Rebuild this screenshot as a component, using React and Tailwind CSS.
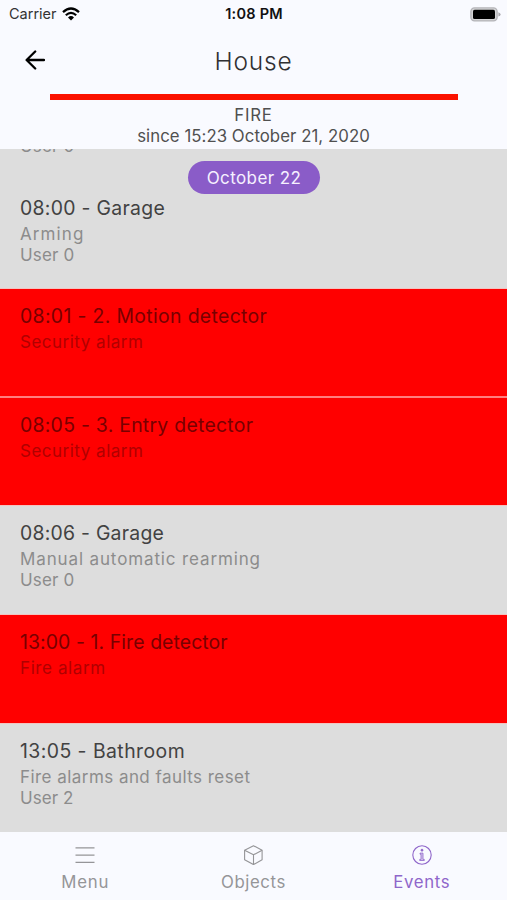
import { useState } from 'react';

const events = [
  {
    id: 2,
    title: '08:00 - Garage',
    lines: ['Arming', 'User 0'],
    alarm: false,
    frame: 'h-[108px] border-t border-transparent',
    titleSpacing: 'tracking-[0.3px]',
    lineSpacing: ['tracking-[1.1px]', 'tracking-[0.15px]'],
  },
  {
    id: 3,
    title: '08:01 - 2. Motion detector',
    lines: ['Security alarm'],
    alarm: true,
    frame: 'h-[108px] border-t border-[#f2c4c1]',
    titleSpacing: 'tracking-[0.35px]',
    lineSpacing: ['tracking-[0.5px]'],
  },
  {
    id: 4,
    title: '08:05 - 3. Entry detector',
    lines: ['Security alarm'],
    alarm: true,
    frame: 'h-[109px] border-t-2 border-[#ff7f7f]',
    titleSpacing: 'tracking-[0.27px]',
    lineSpacing: ['tracking-[0.5px]'],
  },
  {
    id: 5,
    title: '08:06 - Garage',
    lines: ['Manual automatic rearming', 'User 0'],
    alarm: false,
    frame: 'h-[109px] border-t border-[#f2c4c1]',
    titleSpacing: 'tracking-[0.25px]',
    lineSpacing: ['tracking-[0.87px]', 'tracking-[0.15px]'],
  },
  {
    id: 6,
    title: '13:00 - 1. Fire detector',
    lines: ['Fire alarm'],
    alarm: true,
    frame: 'h-[109px] border-t border-[#f2c4c1]',
    titleSpacing: 'tracking-[0.1px]',
    lineSpacing: ['tracking-[0.6px]'],
  },
  {
    id: 7,
    title: '13:05 - Bathroom',
    lines: ['Fire alarms and faults reset', 'User 2'],
    alarm: false,
    frame: 'h-[109px] border-t border-[#f2c4c1]',
    titleSpacing: 'tracking-[0.45px]',
    lineSpacing: ['tracking-[0.45px]', 'tracking-[0.05px]'],
  },
];

function WifiIcon() {
  return (
    <svg className="w-[18px] h-[14px]" viewBox="0 0 18 14">
      <path d="M1 5.1Q9-2 17 5.1" fill="none" stroke="#000" strokeWidth="2.3" />
      <path d="M3.8 8.2Q9 3.6 14.2 8.2" fill="none" stroke="#000" strokeWidth="2.2" />
      <path d="M6 10.4Q9 7.8 12 10.4L9 13.6Z" fill="#000" />
    </svg>
  );
}

function BatteryIcon() {
  return (
    <svg className="w-[31px] h-[15px]" viewBox="0 0 31 15">
      <rect x="0.9" y="0.9" width="26.2" height="13" rx="3.6" fill="#d4d4d6" stroke="#b4b4b8" strokeWidth="1.4" />
      <rect x="3" y="2.8" width="22" height="9.2" rx="1.6" fill="#000" />
      <path d="M28.4 5.2Q30.6 6 30.6 7.4T28.4 9.6Z" fill="#a9a9ad" />
    </svg>
  );
}

function MenuIcon() {
  return (
    <svg className="w-5 h-5" viewBox="0 0 20 20" fill="none" stroke="currentColor" strokeWidth="1.2">
      <path d="M0.5 2.9H19.5M0.5 10.1H19.5M0.5 17.4H19.5" />
    </svg>
  );
}

function CubeIcon() {
  return (
    <svg className="w-5 h-5" viewBox="0 0 20 20" fill="none" stroke="currentColor" strokeWidth="1.1" strokeLinejoin="round">
      <path d="M10.5 0.7L19.1 5.2V14.7L10.5 19.6L1.6 14.7V5.2Z" />
      <path d="M1.6 5.2L10.5 9.8L19.1 5.2M10.5 9.8V19.6" />
    </svg>
  );
}

function InfoIcon() {
  return (
    <svg className="w-5 h-5" viewBox="0 0 20 20" fill="none" stroke="currentColor">
      <circle cx="10" cy="10" r="9.2" strokeWidth="1.1" />
      <circle cx="10" cy="5.2" r="1.1" fill="currentColor" strokeWidth="0.6" />
      <path d="M8 8.1H11V14.4H12.3V15.5H7.7V14.4H9V9.2H8Z" fill="currentColor" fillOpacity="0.35" strokeWidth="0.8" />
    </svg>
  );
}

const tabs = [
  { name: 'Menu', icon: MenuIcon, spacing: 'tracking-[0.8px]' },
  { name: 'Objects', icon: CubeIcon, spacing: 'tracking-[0.6px]' },
  { name: 'Events', icon: InfoIcon, spacing: 'tracking-[0.65px]' },
];

function EventRow({ event }) {
  return (
    <li
      className={`shrink-0 pl-[20px] pt-[14px] whitespace-nowrap ${event.frame} ${
        event.alarm ? 'bg-[#ff0000]' : 'bg-[#dddddd]'
      }`}
    >
      <h2 className={`text-[19.4px] leading-[26px] ${event.titleSpacing} ${event.alarm ? 'text-[#780000]' : 'text-[#424242]'}`}>
        {event.title}
      </h2>
      {event.lines.map((line, index) => (
        <p
          key={line}
          className={`text-[17px] leading-[21px] first-of-type:mt-[3px] ${event.lineSpacing[index]} ${
            event.alarm ? 'text-[#b00000]' : 'text-[#8c8c8c]'
          }`}
        >
          {line}
        </p>
      ))}
    </li>
  );
}

function App() {
  const [activeTab, setActiveTab] = useState('Events');

  return (
    <div className="flex h-[900px] w-[507px] flex-col overflow-hidden bg-[#f9faff] font-['Inter',sans-serif]">
      {/* status bar */}
      <div className="grid h-7 shrink-0 grid-cols-3 items-center pl-[7px] pr-[6px] text-[14.5px]">
        <div className="flex items-center gap-[5px] pl-[2px] text-[#333]">
          Carrier <WifiIcon />
        </div>
        <div className="text-center font-semibold tracking-[0.25px] text-[#111]">1:08 PM</div>
        <div className="flex justify-end">
          <BatteryIcon />
        </div>
      </div>

      {/* header */}
      <header className="grid h-[66px] shrink-0 grid-cols-[70px_1fr_70px] items-center">
        <button className="pb-[3px] pl-[25px]">
          <svg className="h-5 w-5" viewBox="0 0 20 20" fill="none" stroke="#000" strokeWidth="2.3" strokeLinecap="round" strokeLinejoin="round">
            <path d="M19 10H1.8M10.2 1.5L1.6 10L10.2 18.5" />
          </svg>
        </button>
        <h1 className="text-center text-[24.5px] font-light tracking-[0.8px] text-[#303032]">House</h1>
      </header>

      <section className="h-[55px] shrink-0 text-center text-[16.8px] leading-[21px] text-[#505050]">
        <div className="mx-auto mb-[5px] h-[6px] w-[408px] bg-[#fb1200]" />
        <p className="tracking-[0.8px]">FIRE</p>
        <p className="tracking-[0.05px]">since 15:23 October 21, 2020</p>
      </section>

      {/* event list */}
      <main className="relative h-[683px] shrink-0 overflow-hidden bg-[#dddddd]">
        <ul className="flex flex-col">
          <li className="h-[31px] shrink-0 pl-[20px] text-[17px] leading-[21px] tracking-[0.15px] text-[#8c8c8c]">
            <p className="-mt-[13px]">User 0</p>
          </li>
          {events.map((event) => (
            <EventRow key={event.id} event={event} />
          ))}
        </ul>
        <div className="absolute left-[188px] top-[12px] flex h-[33px] w-[132px] items-center justify-center rounded-full bg-[#8a5cc8] pt-[2px] text-[17px] tracking-[0.4px] text-[#f6f0ff]">
          October 22
        </div>
      </main>

      {/* tabs */}
      <nav className="grid h-[68px] shrink-0 grid-cols-3 px-[1px]">
        {tabs.map((tab) => (
          <button
            key={tab.name}
            onClick={() => setActiveTab(tab.name)}
            className={`flex flex-col items-center gap-[5px] pt-[13px] text-[16.8px] leading-[24px] ${tab.spacing} ${
              activeTab === tab.name ? 'text-[#8f66ca]' : 'text-[#959598]'
            }`}
          >
            <tab.icon />
            <span>{tab.name}</span>
          </button>
        ))}
      </nav>
    </div>
  );
}

export default App;
